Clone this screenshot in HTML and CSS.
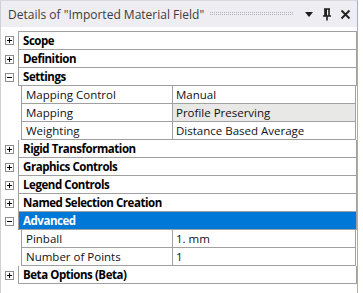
FILE: index.html
```html
<!DOCTYPE html>
<html lang="en">
<head>
  <meta charset="UTF-8" />
  <title>Details of "Imported Material Field"</title>
  <link rel="stylesheet" href="styles.css">
</head>
<body>

<div class="panel">
  <div class="titlebar">
    <span class="title">Details of "Imported Material Field"</span>
    <span class="grip"></span>
    <svg class="ico" width="10" height="10" viewBox="0 0 10 10"><path d="M1 3h8L5 8z" fill="#1e1e1e"/></svg>
    <svg class="ico" width="10" height="13" viewBox="0 0 10 13"><path d="M2 1h6M3 1v7M7 1v7M1 8h8M5 8v4.5" stroke="#1e1e1e" stroke-width="1.6" fill="none"/><path d="M3 1h2v7H3z" fill="#1e1e1e"/></svg>
    <svg class="ico" width="11" height="11" viewBox="0 0 11 11"><path d="M1.5 1.5l8 8M9.5 1.5l-8 8" stroke="#1e1e1e" stroke-width="1.8"/></svg>
  </div>

  <div class="sheet">
    <div class="row first"><span class="tog plus"></span><div class="cells cat">Scope</div></div>
    <div class="row"><span class="tog plus"></span><div class="cells cat">Definition</div></div>
    <div class="row"><span class="tog minus"></span><div class="cells cat">Settings</div></div>
    <div class="row"><span class="tog"></span><div class="cells"><span class="name">Mapping Control</span><span class="val">Manual</span></div></div>
    <div class="row"><span class="tog"></span><div class="cells"><span class="name">Mapping</span><span class="val ro">Profile Preserving</span></div></div>
    <div class="row"><span class="tog"></span><div class="cells"><span class="name">Weighting</span><span class="val">Distance Based Average</span></div></div>
    <div class="row"><span class="tog plus"></span><div class="cells cat">Rigid Transformation</div></div>
    <div class="row"><span class="tog plus"></span><div class="cells cat">Graphics Controls</div></div>
    <div class="row"><span class="tog plus"></span><div class="cells cat">Legend Controls</div></div>
    <div class="row"><span class="tog plus"></span><div class="cells cat">Named Selection Creation</div></div>
    <div class="row"><span class="tog minus"></span><div class="cells cat selected">Advanced</div></div>
    <div class="row"><span class="tog"></span><div class="cells"><span class="name">Pinball</span><span class="val">1. mm</span></div></div>
    <div class="row"><span class="tog"></span><div class="cells"><span class="name">Number of Points</span><span class="val">1</span></div></div>
    <div class="row"><span class="tog plus"></span><div class="cells cat">Beta Options (Beta)</div></div>
  </div>
</div>

</body>
</html>
```

FILE: styles.css
```css
body {
  margin: 0;
  background: #fff;
  font-family: "Open Sans", "Noto Sans", sans-serif;
  font-size: 11.5px;
}

.panel {
  width: 356px;
  height: 300px;
  border-left: 1px solid #cfd0d6;
  border-top: 1px solid #d8d9de;
  border-right: 1px solid #a9acc4;
  background: #fff;
}

.titlebar {
  display: flex;
  align-items: center;
  height: 26px;
  padding: 0 6px 0 7px;
  background: #eeeef2;
  gap: 4px;
}

.title {
  color: #3c3c3c;
  font-size: 12px;
  white-space: nowrap;
}

.grip {
  flex: 1;
  height: 4px;
  margin: 0 2px 0 2px;
  background-image: linear-gradient(90deg, #b0b0ba 1px, transparent 1px);
  background-size: 2px 2px;
  -webkit-mask-image: linear-gradient(#000 1px, transparent 1px);
  -webkit-mask-size: 2px 2px;
  mask-image: linear-gradient(#000 1px, transparent 1px);
  mask-size: 2px 2px;
}

.ico {
  display: block;
  margin-left: 4px;
}

.sheet {
  padding-top: 4px;
}

.row {
  display: flex;
  height: 18px;
}

.tog {
  width: 20px;
  display: flex;
  align-items: center;
  justify-content: center;
}

.tog.plus::before, .tog.minus::before {
  content: "";
  width: 7px;
  height: 7px;
  border: 1px solid #8c8c8c;
  background:
    linear-gradient(#000, #000) center / 5px 1px no-repeat,
    #fff;
}

.tog.plus::before {
  background:
    linear-gradient(#000, #000) center / 5px 1px no-repeat,
    linear-gradient(#000, #000) center / 1px 5px no-repeat,
    #fff;
}

.cells {
  flex: 0 0 333px;
  display: flex;
  align-items: center;
  border: 1px solid #a0a0a0;
  border-top: none;
  height: 17px;
  color: #101020;
}

.row.first {
  height: 19px;
}

.row.first .cells {
  border-top: 1px solid #a0a0a0;
}

.cat {
  font-weight: bold;
  letter-spacing: -0.45px;
  color: #000;
  padding-left: 4px;
}

.cat.selected {
  background: #0078d7;
  color: #fff;
}

.name {
  width: 146px;
  padding-left: 4px;
  height: 100%;
  display: flex;
  align-items: center;
  border-right: 1px solid #a0a0a0;
}

.val {
  flex: 1;
  height: 100%;
  display: flex;
  align-items: center;
  padding-left: 3px;
}

.val.ro {
  background: #e8e8e6;
}
```
